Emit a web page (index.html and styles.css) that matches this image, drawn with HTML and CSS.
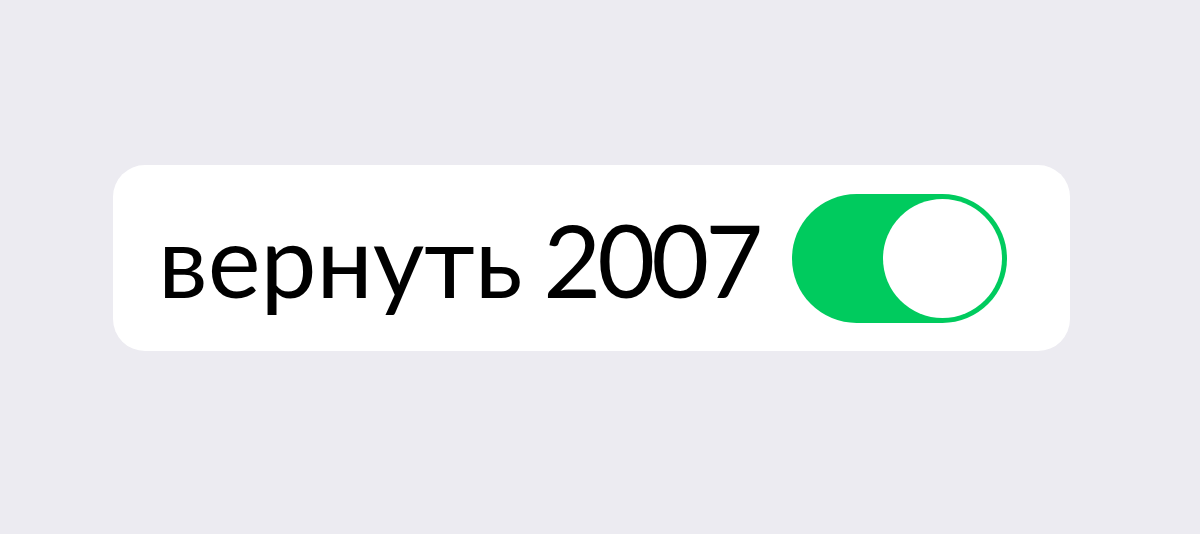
FILE: index.html
```html
<!DOCTYPE html>
<html lang="ru">
<head>
<meta charset="utf-8">
<title>вернуть 2007</title>
<link rel="stylesheet" href="styles.css">
</head>
<body>
<div class="page">
  <div class="card">
    <span class="label">вернуть <span class="year">2007</span></span>
    <div class="toggle" role="switch" aria-checked="true">
      <div class="knob"></div>
    </div>
  </div>
</div>
</body>
</html>
```
FILE: styles.css
```css
html, body {
  margin: 0;
  padding: 0;
  background: #ecebf1;
}
.page {
  width: 1200px;
  height: 534px;
  box-sizing: border-box;
  padding: 165px 0 0 113px;
}
.card {
  width: 957px;
  height: 186px;
  box-sizing: border-box;
  background: #ffffff;
  border-radius: 32px;
  display: flex;
  align-items: center;
  padding-left: 45px;
}
.label {
  font-family: Lato, "Liberation Sans", sans-serif;
  font-size: 100px;
  line-height: 1;
  color: #000;
  word-spacing: -5px;
  white-space: nowrap;
  margin-top: 2px;
}
.year {
  letter-spacing: -4px;
}
.toggle {
  margin-left: 33px;
  width: 215px;
  height: 129px;
  border-radius: 65px;
  background: #00cb5e;
  display: flex;
  justify-content: flex-end;
  align-items: center;
  padding-right: 5px;
  box-sizing: border-box;
}
.knob {
  width: 119px;
  height: 119px;
  border-radius: 50%;
  background: #ffffff;
}
```
